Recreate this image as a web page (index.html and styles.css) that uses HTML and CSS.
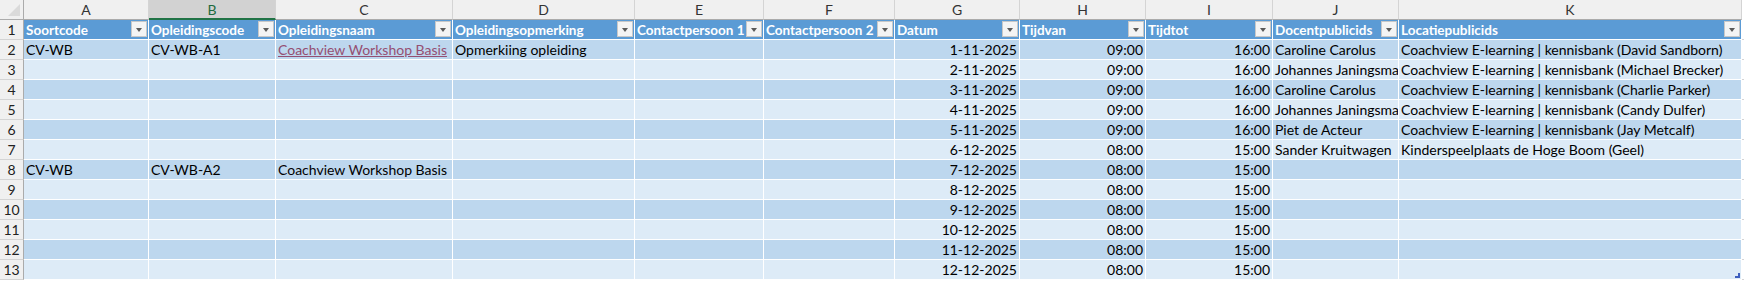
FILE: index.html
```html
<!DOCTYPE html>
<html>
<head>
<meta charset="utf-8">
<link rel="stylesheet" href="styles.css">
</head>
<body>
<div class="sheet">
  <div class="corner"><span class="tri"></span></div>
  <div class="ch">A</div><div class="ch sel">B</div><div class="ch">C</div><div class="ch">D</div><div class="ch">E</div><div class="ch">F</div><div class="ch">G</div><div class="ch">H</div><div class="ch">I</div><div class="ch">J</div><div class="ch">K</div><div class="ch extra"></div>

  <div class="rh">1</div>
  <div class="th">Soortcode<span class="fb"></span></div>
  <div class="th">Opleidingscode<span class="fb"></span></div>
  <div class="th">Opleidingsnaam<span class="fb"></span></div>
  <div class="th">Opleidingsopmerking<span class="fb"></span></div>
  <div class="th">Contactpersoon 1<span class="fb"></span></div>
  <div class="th">Contactpersoon 2<span class="fb"></span></div>
  <div class="th">Datum<span class="fb"></span></div>
  <div class="th">Tijdvan<span class="fb"></span></div>
  <div class="th">Tijdtot<span class="fb"></span></div>
  <div class="th">Docentpublicids<span class="fb"></span></div>
  <div class="th">Locatiepublicids<span class="fb"></span></div>
  <div class="ex"></div>

  <div class="rh">2</div>
  <div class="c d">CV-WB</div><div class="c d">CV-WB-A1</div><div class="c d"><span class="link">Coachview Workshop Basis</span></div><div class="c d">Opmerkiing opleiding</div><div class="c d"></div><div class="c d"></div><div class="c d r">1-11-2025</div><div class="c d r">09:00</div><div class="c d r">16:00</div><div class="c d">Caroline Carolus</div><div class="c d">Coachview E-learning | kennisbank (David Sandborn)</div><div class="ex"></div>

  <div class="rh">3</div>
  <div class="c l"></div><div class="c l"></div><div class="c l"></div><div class="c l"></div><div class="c l"></div><div class="c l"></div><div class="c l r">2-11-2025</div><div class="c l r">09:00</div><div class="c l r">16:00</div><div class="c l">Johannes Janingsma</div><div class="c l">Coachview E-learning | kennisbank (Michael Brecker)</div><div class="ex"></div>

  <div class="rh">4</div>
  <div class="c d"></div><div class="c d"></div><div class="c d"></div><div class="c d"></div><div class="c d"></div><div class="c d"></div><div class="c d r">3-11-2025</div><div class="c d r">09:00</div><div class="c d r">16:00</div><div class="c d">Caroline Carolus</div><div class="c d">Coachview E-learning | kennisbank (Charlie Parker)</div><div class="ex"></div>

  <div class="rh">5</div>
  <div class="c l"></div><div class="c l"></div><div class="c l"></div><div class="c l"></div><div class="c l"></div><div class="c l"></div><div class="c l r">4-11-2025</div><div class="c l r">09:00</div><div class="c l r">16:00</div><div class="c l">Johannes Janingsma</div><div class="c l">Coachview E-learning | kennisbank (Candy Dulfer)</div><div class="ex"></div>

  <div class="rh">6</div>
  <div class="c d"></div><div class="c d"></div><div class="c d"></div><div class="c d"></div><div class="c d"></div><div class="c d"></div><div class="c d r">5-11-2025</div><div class="c d r">09:00</div><div class="c d r">16:00</div><div class="c d">Piet de Acteur</div><div class="c d">Coachview E-learning | kennisbank (Jay Metcalf)</div><div class="ex"></div>

  <div class="rh">7</div>
  <div class="c l"></div><div class="c l"></div><div class="c l"></div><div class="c l"></div><div class="c l"></div><div class="c l"></div><div class="c l r">6-12-2025</div><div class="c l r">08:00</div><div class="c l r">15:00</div><div class="c l">Sander Kruitwagen</div><div class="c l">Kinderspeelplaats de Hoge Boom (Geel)</div><div class="ex"></div>

  <div class="rh">8</div>
  <div class="c d">CV-WB</div><div class="c d">CV-WB-A2</div><div class="c d">Coachview Workshop Basis</div><div class="c d"></div><div class="c d"></div><div class="c d"></div><div class="c d r">7-12-2025</div><div class="c d r">08:00</div><div class="c d r">15:00</div><div class="c d"></div><div class="c d"></div><div class="ex"></div>

  <div class="rh">9</div>
  <div class="c l"></div><div class="c l"></div><div class="c l"></div><div class="c l"></div><div class="c l"></div><div class="c l"></div><div class="c l r">8-12-2025</div><div class="c l r">08:00</div><div class="c l r">15:00</div><div class="c l"></div><div class="c l"></div><div class="ex"></div>

  <div class="rh">10</div>
  <div class="c d"></div><div class="c d"></div><div class="c d"></div><div class="c d"></div><div class="c d"></div><div class="c d"></div><div class="c d r">9-12-2025</div><div class="c d r">08:00</div><div class="c d r">15:00</div><div class="c d"></div><div class="c d"></div><div class="ex"></div>

  <div class="rh">11</div>
  <div class="c l"></div><div class="c l"></div><div class="c l"></div><div class="c l"></div><div class="c l"></div><div class="c l"></div><div class="c l r">10-12-2025</div><div class="c l r">08:00</div><div class="c l r">15:00</div><div class="c l"></div><div class="c l"></div><div class="ex"></div>

  <div class="rh">12</div>
  <div class="c d"></div><div class="c d"></div><div class="c d"></div><div class="c d"></div><div class="c d"></div><div class="c d"></div><div class="c d r">11-12-2025</div><div class="c d r">08:00</div><div class="c d r">15:00</div><div class="c d"></div><div class="c d"></div><div class="ex"></div>

  <div class="rh">13</div>
  <div class="c l"></div><div class="c l"></div><div class="c l"></div><div class="c l"></div><div class="c l"></div><div class="c l"></div><div class="c l r">12-12-2025</div><div class="c l r">08:00</div><div class="c l r">15:00</div><div class="c l"></div><div class="c l last"><svg class="handle" width="5" height="5" viewBox="0 0 5 5"><path d="M3 0h2v5H0V3h3z" fill="#3f5fbf"/></svg></div><div class="ex"></div>
</div>
</body>
</html>
```

FILE: styles.css
```css
html, body {
  margin: 0;
  padding: 0;
  background: #ffffff;
}

body {
  font-family: Lato, "Liberation Sans", sans-serif;
  font-size: 14px;
  color: #000000;
}

.sheet {
  display: grid;
  grid-template-columns: 24px 125px 127px 177px 182px 129px 131px 125px 126px 127px 126px 343px 2px;
  grid-auto-rows: 20px;
}

.sheet > div {
  box-sizing: border-box;
  white-space: nowrap;
  overflow: hidden;
  line-height: 20px;
}

.corner {
  position: relative;
  background: #f0f0f0;
  border-right: 1px solid #ababab;
  border-bottom: 1px solid #ababab;
}

.tri {
  position: absolute;
  right: 3px;
  bottom: 3px;
  width: 0;
  height: 0;
  border-left: 12px solid transparent;
  border-bottom: 12px solid #dadada;
}

.ch {
  background: #f0f0f0;
  border-right: 1px solid #d4d4d4;
  border-bottom: 1px solid #ababab;
  text-align: center;
  color: #333333;
  font-size: 14px;
}

.ch.sel {
  background: #d2d2d2;
  color: #1e6b3f;
  border-bottom: 2px solid #217346;
}

.ch.extra {
  background: #ffffff;
  border: none;
}

.rh {
  background: #f0f0f0;
  border-right: 1px solid #ababab;
  border-bottom: 1px solid #d4d4d4;
  text-align: center;
  color: #222222;
  font-size: 14px;
}

.th {
  position: relative;
  background: #5b9bd5;
  color: #ffffff;
  font-weight: 700;
  font-size: 13.5px;
  padding-left: 2px;
  border-right: 1px solid #ffffff;
  border-bottom: 1px solid #ffffff;
}

.fb {
  position: absolute;
  right: 1px;
  top: 1px;
  width: 16px;
  height: 16px;
  box-sizing: border-box;
  background: #f4f4f4;
  border: 1px solid #c8c8c8;
}

.fb::after {
  content: "";
  position: absolute;
  left: 4px;
  top: 6px;
  border-left: 3.5px solid transparent;
  border-right: 3.5px solid transparent;
  border-top: 4px solid #5a5a5a;
}

.c {
  padding: 0 2px;
  border-right: 1px solid #ffffff;
  border-bottom: 1px solid #ffffff;
}

.d {
  background: #bdd7ee;
}

.l {
  background: #ddebf7;
}

.r {
  text-align: right;
}

.link {
  color: #954f72;
  text-decoration: underline;
}

.ex {
  border-bottom: 1px solid #d4d4d4;
}

.last {
  position: relative;
}

.handle {
  position: absolute;
  right: 1px;
  bottom: 1px;
}
```
